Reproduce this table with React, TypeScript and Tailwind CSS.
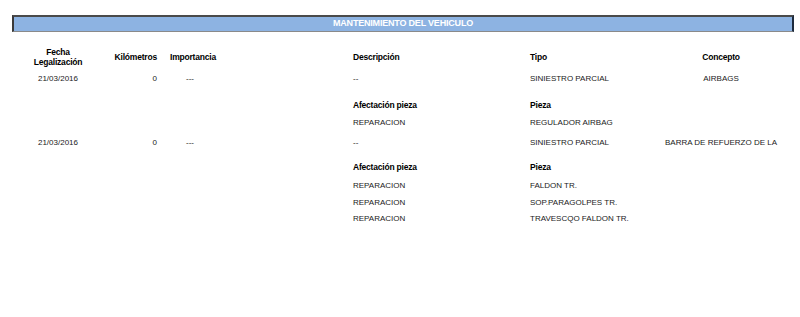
import React from 'react';

const cols = 'grid grid-cols-[88px_55px_72px_124px_177px_135px_112px]';

type Entry = {
    fecha: string;
    km: string;
    importancia: string;
    descripcion: string;
    tipo: string;
    concepto: string;
    piezas: Array<{ afectacion: string; pieza: string }>;
};

const entries: Entry[] = [
    {
        fecha: '21/03/2016',
        km: '0',
        importancia: '---',
        descripcion: '--',
        tipo: 'SINIESTRO PARCIAL',
        concepto: 'AIRBAGS',
        piezas: [{ afectacion: 'REPARACION', pieza: 'REGULADOR AIRBAG' }],
    },
    {
        fecha: '21/03/2016',
        km: '0',
        importancia: '---',
        descripcion: '--',
        tipo: 'SINIESTRO PARCIAL',
        concepto: 'BARRA DE REFUERZO DE LA',
        piezas: [
            { afectacion: 'REPARACION', pieza: 'FALDON TR.' },
            { afectacion: 'REPARACION', pieza: 'SOP.PARAGOLPES TR.' },
            { afectacion: 'REPARACION', pieza: 'TRAVESCQO FALDON TR.' },
        ],
    },
];

// margin before each piece row, first/second entry
const pieceGap = ['mt-[7px]', 'mt-[5px]', 'mt-[4px]'];

const EntryRows: React.FC<{ e: Entry; first: boolean }> = ({ e, first }) => (
    <>
        <div className={`${cols} h-[12px] items-center text-[8px] leading-[12px] text-[#1a1a1a] ${first ? 'mt-[5px]' : 'mt-[8px]'}`}>
            <div className="text-center">{e.fecha}</div>
            <div className="text-right">{e.km}</div>
            <div className="text-center pr-[6px]">{e.importancia}</div>
            <div />
            <div>{e.descripcion}</div>
            <div>{e.tipo}</div>
            <div className="text-center whitespace-nowrap">{e.concepto}</div>
        </div>
        <div className={`${cols} h-[12px] items-center text-[8.5px] font-bold leading-[12px] text-black tracking-[-0.2px] ${first ? 'mt-[14px]' : 'mt-[12px]'}`}>
            <div className="col-start-5">Afectación pieza</div>
            <div>Pieza</div>
        </div>
        {e.piezas.map((p, i) => (
            <div
                key={i}
                className={`${cols} h-[12px] items-center text-[8px] leading-[12px] text-[#1a1a1a] ${first ? 'mt-[6px]' : pieceGap[i]}`}
            >
                <div className="col-start-5">{p.afectacion}</div>
                <div>{p.pieza}</div>
            </div>
        ))}
    </>
);

export default function App() {
    return (
        <div className="w-[800px] h-[317px] bg-white font-['Liberation_Sans',Arial,sans-serif] pt-[15px] px-[12px]">
            <div className="w-[782px] h-[17px] bg-[#8db3e2] border-t-2 border-l-2 border-r-2 border-b-[1.5px] border-t-[#4a4a4a] border-l-[#3a3a3a] border-r-[#1d2b3e] border-b-[#8a8a8a] flex items-center justify-center">
                <span className="text-white text-[9px] font-bold tracking-[-0.2px]">MANTENIMIENTO DEL VEHICULO</span>
            </div>
            <div className="pl-[2px]">
                <div className={`${cols} h-[22px] mt-[14px] items-center text-[8.5px] font-bold leading-[10.5px] text-black tracking-[-0.2px]`}>
                    <div className="text-center">
                        Fecha
                        <br />
                        Legalización
                    </div>
                    <div className="text-right">Kilómetros</div>
                    <div className="text-center">Importancia</div>
                    <div />
                    <div>Descripción</div>
                    <div>Tipo</div>
                    <div className="text-center">Concepto</div>
                </div>
                {entries.map((e, i) => (
                    <EntryRows key={i} e={e} first={i === 0} />
                ))}
            </div>
        </div>
    );
}
